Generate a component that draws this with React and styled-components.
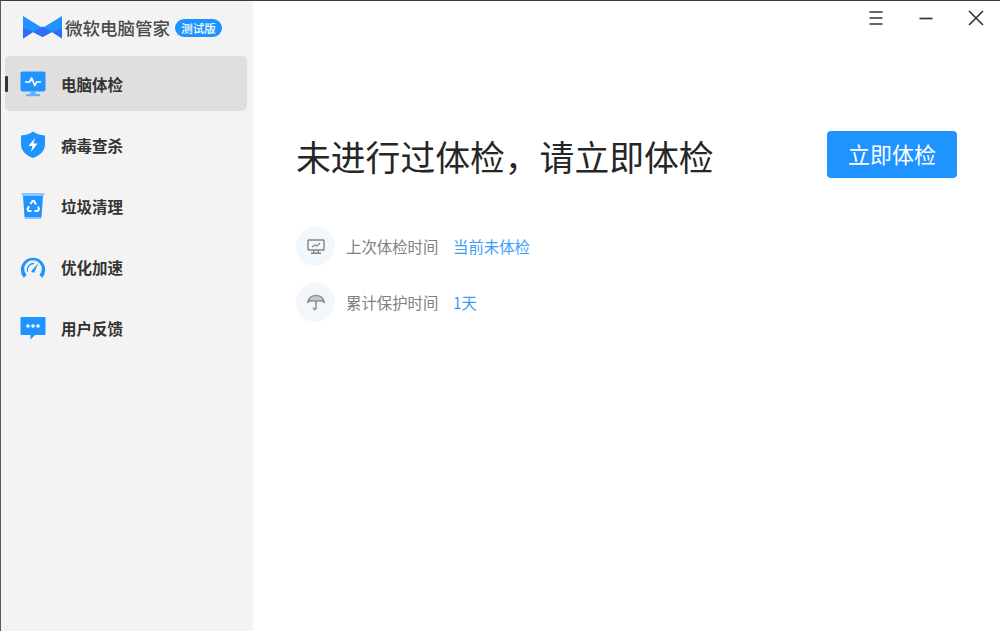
import React from "react";
import styled, { createGlobalStyle } from "styled-components";

const Global = createGlobalStyle`
  html, body { margin: 0; padding: 0; background: #fff; }
  body { font-family: "Noto Sans CJK SC", "Noto Sans", sans-serif; }
`;

const Win = styled.div`
  width: 1000px; height: 631px; box-sizing: border-box; overflow: hidden;
  display: flex; background: #fff;
  border-top: 1px solid #3a3a3a; border-left: 1px solid #5a5a5a;
`;
const Side = styled.aside`
  width: 252px; flex: none; background: #f3f3f3; display: flex; flex-direction: column;
  padding: 0 6px 0 4px; box-sizing: border-box;
`;
const Brand = styled.div`
  height: 55px; display: flex; align-items: center; padding: 0 0 2px 18px; box-sizing: border-box;
`;
const BrandName = styled.span`
  font-size: 17.5px; font-weight: 500; line-height: 20px; color: #4a4a4a; margin-left: 3px; white-space: nowrap;
`;
const Badge = styled.span`
  margin-left: 5px; width: 47px; height: 18px; border-radius: 9px; background: #1f93ff; color: #fff;
  font-size: 11.5px; font-weight: 500; line-height: 18px; text-align: center; white-space: nowrap;
`;
const Nav = styled.nav`
  display: flex; flex-direction: column; gap: 6px;
`;
const Item = styled.div`
  position: relative; height: 55px; display: flex; align-items: center; padding-left: 15px; gap: 15px;
  border-radius: 5px; background: ${p => (p.$active ? "#e1dfdd" : "transparent")};
`;
const Marker = styled.span`
  position: absolute; left: 0; top: 20px; width: 3px; height: 16px; background: #333; border-radius: 1px;
`;
const Label = styled.span`
  font-size: 15.5px; font-weight: 700; color: #333; line-height: 20px; white-space: nowrap;
`;
const IconBox = styled.span`
  width: 26px; height: 28px; display: flex; align-items: center; justify-content: center; flex: none;
`;
const Main = styled.main`
  flex: 1; display: flex; flex-direction: column; padding: 0 43px 0 43px; min-width: 0;
`;
const TitleBar = styled.div`
  height: 34px; margin-right: -43px; display: flex; justify-content: flex-end; align-items: center; gap: 34px; padding: 0 16px 3px 0;
`;
const Ctl = styled.svg`
  width: 16px; height: 16px; display: block;
`;
const Head = styled.div`
  margin-top: 93px; height: 54px; display: flex; align-items: flex-start; justify-content: space-between;
`;
const Title = styled.h1`
  margin: 1px 0 0; font-size: 34.8px; font-weight: 400; color: #262626; line-height: 48px; white-space: nowrap;
`;
const Btn = styled.button`
  width: 130px; height: 47px; border: 0; border-radius: 4px; background: #1f93ff; color: #fff;
  font: 400 22px/45px "Noto Sans CJK SC", sans-serif; padding: 0 0 2px;
`;
const Rows = styled.div`
  margin-top: 42px; display: flex; flex-direction: column; gap: 17px;
`;
const Row = styled.div`
  display: flex; align-items: center; height: 39px;
`;
const Circle = styled.span`
  width: 39px; height: 39px; border-radius: 50%; background: #f2f7fc; display: flex; align-items: center; justify-content: center; flex: none;
`;
const Key = styled.span`
  margin-left: 11px; width: 107px; font-size: 15.4px; color: #808080; white-space: nowrap; line-height: 20px; padding-bottom: 2px;
`;
const Val = styled.span`
  font-size: 15.4px; color: #3f9cf6; white-space: nowrap; line-height: 20px; padding-bottom: 2px;
`;

const Logo = () => (
  <svg width="39" height="23" viewBox="0 0 39 23">
    <path d="M0 0 L19.5 12 L39 0 V22.5 L29 16 L19.5 21 L10 16 L0 22.5 Z" fill="#1f93ff" />
    <path d="M0 22.5 V12 L10 16 Z M39 22.5 V12 L29 16 Z" fill="#2f6df2" />
    <path d="M10 16 L19.5 10.5 L29 16 L19.5 21 Z" fill="#2f6df2" />
  </svg>
);
const Monitor = () => (
  <svg width="26" height="26" viewBox="0 0 26 26">
    <rect x="0.5" y="0.5" width="25" height="20" rx="2" fill="#1f93ff" />
    <path d="M5 11h4.5l2.2-4 3 7.5 2-3.5H21" fill="none" stroke="#fff" strokeWidth="1.7" strokeLinejoin="round" />
    <rect x="10.5" y="20.5" width="5" height="2.5" fill="#5fb2ff" />
    <rect x="6" y="23" width="14" height="2.2" rx="1" fill="#5fb2ff" />
  </svg>
);
const Shield = () => (
  <svg width="26" height="28" viewBox="0 0 26 28">
    <path d="M13 0.5 C16 3 20 4 25 4.5 V13 C25 20 20 24.5 13 27 C6 24.5 1 20 1 13 V4.5 C6 4 10 3 13 0.5 Z" fill="#1f93ff" />
    <path d="M15 7 L8.5 15 H12.5 L11 21 L17.5 12.5 H13.5 Z" fill="#fff" />
  </svg>
);
const Bin = () => (
  <svg width="24" height="28" viewBox="0 0 24 28">
    <path d="M0.5 1 H23.5 L23 4 H1 Z" fill="#8cc6ff" />
    <path d="M2 4 H22 L20.5 25 H3.5 Z" fill="#1f93ff" />
    <path d="M3.5 25 H20.5 L20.3 27 H3.7 Z" fill="#8cc6ff" />
    <g fill="none" stroke="#fff" strokeWidth="2">
      <path d="M9.5 12 L11.5 9 H13 L15 12.5" />
      <path d="M17 14.5 L18 17 L16.8 19 H13.5" />
      <path d="M10.5 19 H7.5 L6.5 17 L8 14.3" />
    </g>
  </svg>
);
const Gauge = () => (
  <svg width="26" height="24" viewBox="0 0 26 24">
    <path d="M4.2 22.5 H3.5 A12.2 12.2 0 1 1 22.5 22.5 H21.8 L19.5 20 A8.8 8.8 0 1 0 6.5 20 Z" fill="#1f93ff" />
    <path d="M7.5 16.5 A6.3 6.3 0 0 1 14 8.6" fill="none" stroke="#1f93ff" strokeWidth="1.5" />
    <path d="M11 16.5 L18.5 8 L14 18 Z" fill="#1f93ff" />
  </svg>
);
const Chat = () => (
  <svg width="26" height="24" viewBox="0 0 26 24">
    <path d="M1.5 1 H24.5 A1 1 0 0 1 25.5 2 V18 A1 1 0 0 1 24.5 19 H15 L10.5 23.5 V19 H1.5 A1 1 0 0 1 0.5 18 V2 A1 1 0 0 1 1.5 1 Z" fill="#1f93ff" />
    <circle cx="8" cy="10" r="1.8" fill="#fff" />
    <circle cx="13" cy="10" r="1.8" fill="#fff" />
    <circle cx="18" cy="10" r="1.8" fill="#fff" />
  </svg>
);
const SmallMonitor = () => (
  <svg width="18" height="15" viewBox="0 0 18 15" fill="none" stroke="#858585" strokeWidth="1.4">
    <rect x="1" y="1" width="16" height="10" rx="0.5" />
    <path d="M5 8 L8 6 L10 7 L13 4" strokeWidth="1.1" />
    <path d="M7 11 L6.5 14 M11 11 L11.5 14 M4 14.2 H14" />
  </svg>
);
const Umbrella = () => (
  <svg width="18" height="17" viewBox="0 0 18 17" fill="none" stroke="#8f8f8f" strokeWidth="1.6">
    <path d="M1 8 C1.5 4 5 1.5 9 1.5 C13 1.5 16.5 4 17 8 C14.5 6.5 11.5 6.5 9 7.5 C6.5 6.5 3.5 6.5 1 8 Z" fill="#c4c7ca" />
    <path d="M9 7.5 V14 C9 16 6.5 16 6.5 14" strokeLinecap="round" />
  </svg>
);

const items = [
  ["电脑体检", <Monitor />],
  ["病毒查杀", <Shield />],
  ["垃圾清理", <Bin />],
  ["优化加速", <Gauge />],
  ["用户反馈", <Chat />],
];

export default function App() {
  return (
    <Win>
      <Global />
      <Side>
        <Brand>
          <Logo />
          <BrandName>微软电脑管家</BrandName>
          <Badge>测试版</Badge>
        </Brand>
        <Nav>
          {items.map(([t, ic], i) => (
            <Item key={t} $active={i === 0}>
              {i === 0 && <Marker />}
              <IconBox>{ic}</IconBox>
              <Label>{t}</Label>
            </Item>
          ))}
        </Nav>
      </Side>
      <Main>
        <TitleBar>
          <Ctl viewBox="0 0 16 16" stroke="#333" strokeWidth="1.7" fill="none"><path d="M1.5 2h13M1.5 8h13M1.5 14h13" /></Ctl>
          <Ctl viewBox="0 0 16 16" stroke="#333" strokeWidth="1.7" fill="none"><path d="M1.5 8.5h13" /></Ctl>
          <Ctl viewBox="0 0 16 16" stroke="#333" strokeWidth="1.6" fill="none"><path d="M1 1l14 14M15 1L1 15" /></Ctl>
        </TitleBar>
        <Head>
          <Title>未进行过体检，请立即体检</Title>
          <Btn>立即体检</Btn>
        </Head>
        <Rows>
          <Row>
            <Circle><SmallMonitor /></Circle>
            <Key>上次体检时间</Key>
            <Val>当前未体检</Val>
          </Row>
          <Row>
            <Circle><Umbrella /></Circle>
            <Key>累计保护时间</Key>
            <Val>1天</Val>
          </Row>
        </Rows>
      </Main>
    </Win>
  );
}
